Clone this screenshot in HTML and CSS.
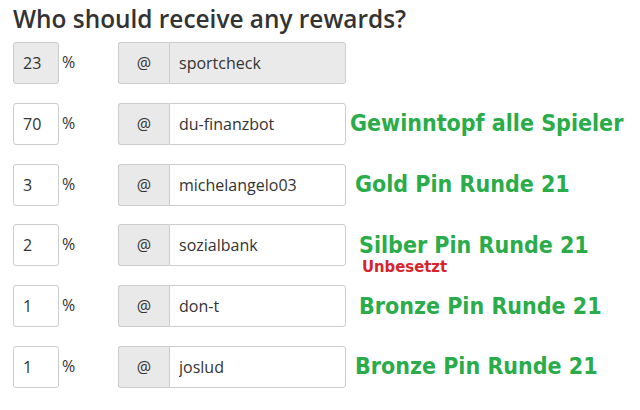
FILE: index.html
```html
<!DOCTYPE html>
<html>
<head>
<meta charset="utf-8">
<link rel="stylesheet" href="styles.css">
</head>
<body>
<div class="page">
  <h2 class="title">Who should receive any rewards?</h2>
  <div class="rows">
    <div class="row">
      <div class="share">
        <input class="num" type="text" value="23" disabled>
        <span class="sign">%</span>
      </div>
      <div class="group">
        <span class="addon">@</span>
        <input class="name" type="text" value="sportcheck" disabled>
      </div>
    </div>
    <div class="row">
      <div class="share">
        <input class="num" type="text" value="70">
        <span class="sign">%</span>
      </div>
      <div class="group">
        <span class="addon">@</span>
        <input class="name" type="text" value="du-finanzbot">
      </div>
      <div class="label tight">Gewinntopf alle Spieler</div>
    </div>
    <div class="row">
      <div class="share">
        <input class="num" type="text" value="3">
        <span class="sign">%</span>
      </div>
      <div class="group">
        <span class="addon">@</span>
        <input class="name" type="text" value="michelangelo03">
      </div>
      <div class="label">Gold Pin Runde 21</div>
    </div>
    <div class="row">
      <div class="share">
        <input class="num" type="text" value="2">
        <span class="sign">%</span>
      </div>
      <div class="group">
        <span class="addon">@</span>
        <input class="name" type="text" value="sozialbank">
      </div>
      <div class="label wide stacked">
        <span>Silber Pin Runde 21</span>
        <span class="note">Unbesetzt</span>
      </div>
    </div>
    <div class="row">
      <div class="share">
        <input class="num" type="text" value="1">
        <span class="sign">%</span>
      </div>
      <div class="group">
        <span class="addon">@</span>
        <input class="name" type="text" value="don-t">
      </div>
      <div class="label wide">Bronze Pin Runde 21</div>
    </div>
    <div class="row">
      <div class="share">
        <input class="num" type="text" value="1">
        <span class="sign">%</span>
      </div>
      <div class="group">
        <span class="addon">@</span>
        <input class="name" type="text" value="joslud">
      </div>
      <div class="label">Bronze Pin Runde 21</div>
    </div>
  </div>
</div>
</body>
</html>
```
FILE: styles.css
```css
html, body {
  margin: 0;
  padding: 0;
  background: #ffffff;
}

.page {
  padding: 0 0 0 13px;
  font-family: "Open Sans", "Liberation Sans", sans-serif;
  color: #333333;
}

.title {
  margin: 0;
  padding-top: 2px;
  height: 40px;
  font-size: 24.4px;
  font-weight: 600;
  line-height: 34px;
  color: #333333;
}

.rows {
  display: flex;
  flex-direction: column;
  gap: 18.8px;
}

.row {
  display: flex;
  align-items: center;
  height: 42px;
}

.share {
  display: flex;
  align-items: flex-start;
  flex: none;
  width: 105px;
  height: 42px;
}

input {
  font-family: "Open Sans", "Liberation Sans", sans-serif;
  font-size: 16px;
  color: #333333;
  margin: 0;
  outline: none;
  box-sizing: border-box;
}

.num {
  flex: none;
  width: 46px;
  height: 42px;
  padding: 0 0 0 9px;
  border: 1px solid #cccccc;
  border-radius: 3px;
  background: #ffffff;
}

.num:disabled, .name:disabled {
  background: #eaeaea;
  color: #333333;
  opacity: 1;
}

.sign {
  margin: 10px 0 0 3px;
  font-size: 16px;
  line-height: 20px;
}

.group {
  display: flex;
  flex: none;
  width: 228px;
  height: 42px;
}

.addon {
  box-sizing: border-box;
  flex: none;
  width: 51px;
  height: 42px;
  display: flex;
  align-items: center;
  justify-content: center;
  background: #e9e9e9;
  border: 1px solid #cccccc;
  border-right: none;
  border-radius: 3px 0 0 3px;
  font-size: 16px;
}

.name {
  flex: 1;
  min-width: 0;
  width: 0;
  height: 42px;
  padding: 0 0 0 9px;
  border: 1px solid #cccccc;
  border-radius: 0 3px 3px 0;
  background: #ffffff;
}

.label {
  margin-left: 9px;
  font-family: "DejaVu Sans Condensed", "DejaVu Sans", sans-serif;
  font-weight: bold;
  font-size: 23px;
  line-height: 27px;
  color: #2aac4a;
  white-space: nowrap;
}

.label.tight {
  margin-left: 4px;
}

.label.wide {
  margin-left: 13px;
}

.label.stacked {
  display: flex;
  flex-direction: column;
  margin-top: 16px;
}

.note {
  margin-left: 3px;
  font-size: 16.5px;
  line-height: 15px;
  color: #d7232b;
}
```
